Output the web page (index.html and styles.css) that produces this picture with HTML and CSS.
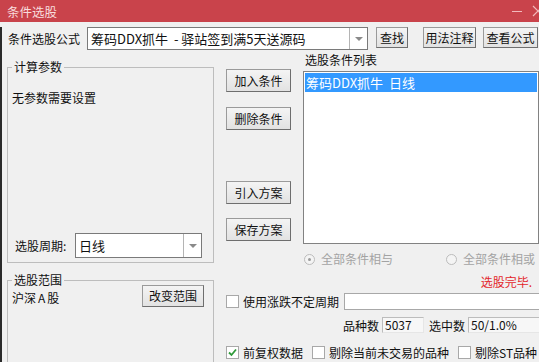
FILE: index.html
```html
<!DOCTYPE html>
<html lang="zh-CN">
<head>
  <meta charset="UTF-8"/>
  <title>条件选股</title>
  <link rel="stylesheet" href="styles.css">
</head>
<body>
  <div class="window">
    <!-- TITLE BAR -->
    <div class="titlebar">
      <span class="title">条件选股</span>
      <div class="title-ctrls">
        <span class="ctrl-min"></span>
        <svg class="ctrl-close" width="12" height="12" viewBox="0 0 12 12">
          <path d="M1 1 L11 11 M11 1 L1 11" stroke="#f2b9bc" stroke-width="1.2" fill="none"/>
        </svg>
      </div>
    </div>

    <div class="client">
      <!-- FORMULE -->
      <div class="formula-row">
        <span class="formula-label">条件选股公式</span>
        <div class="combo formula-combo">
          <span class="combo-text">筹码DDX抓牛 &nbsp;- 驿站签到满5天送源码</span>
          <span class="combo-drop"><i class="arrow"></i></span>
        </div>
        <button class="btn btn-find">查找</button>
        <button class="btn btn-usage">用法注释</button>
        <button class="btn btn-view">查看公式</button>
      </div>

      <div class="body">
        <!-- COLONNE GAUCHE -->
        <div class="left">
          <div class="group group-params">
            <span class="group-title">计算参数</span>
            <div class="no-params">无参数需要设置</div>
            <div class="period-row">
              <span class="period-label">选股周期:</span>
              <div class="combo period-combo">
                <span class="combo-text">日线</span>
                <span class="combo-drop"><i class="arrow"></i></span>
              </div>
            </div>
          </div>
          <div class="group group-range">
            <span class="group-title">选股范围</span>
            <div class="range-row">
              <span class="range-name">沪深<span class="wide">A</span>股</span>
              <button class="btn btn-range">改变范围</button>
            </div>
          </div>
        </div>

        <!-- COLONNE DROITE -->
        <div class="right">
          <div class="right-top">
            <div class="btn-col">
              <button class="btn btn-side btn-add">加入条件</button>
              <button class="btn btn-side btn-del">删除条件</button>
              <button class="btn btn-side btn-import">引入方案</button>
              <button class="btn btn-side btn-save">保存方案</button>
            </div>
            <div class="list-col">
              <div class="list-label">选股条件列表</div>
              <div class="listbox">
                <div class="list-item selected">筹码DDX抓牛 &nbsp;日线</div>
              </div>
            </div>
          </div>

          <div class="radio-row">
            <span class="radio checked"></span><span class="radio-text">全部条件相与</span>
            <span class="radio radio-or"></span><span class="radio-text">全部条件相或</span>
          </div>

          <div class="status">选股完毕.</div>

          <div class="check-row row-period">
            <span class="checkbox"></span>
            <span class="check-text">使用涨跌不定周期</span>
            <span class="field field-period"></span>
          </div>

          <div class="count-row">
            <span class="count-label">品种数</span>
            <span class="field field-total">5037</span>
            <span class="count-label">选中数</span>
            <span class="field field-selected">50/1.0%</span>
          </div>

          <div class="check-row row-options">
            <span class="checkbox checked">
              <svg width="11" height="11" viewBox="0 0 11 11"><path d="M2 5.5 L4.5 8 L9 2.5" stroke="#2f9a3a" stroke-width="1.8" fill="none"/></svg>
            </span>
            <span class="check-text">前复权数据</span>
            <span class="checkbox cb-gap"></span>
            <span class="check-text">剔除当前未交易的品种</span>
            <span class="checkbox cb-gap"></span>
            <span class="check-text">剔除ST品种</span>
          </div>
        </div>
      </div>
    </div>
  </div>
</body>
</html>
```

FILE: styles.css
```css
body {
  margin: 0;
  padding: 0;
  background: #f0f0f0;
}
.window {
  width: 539px;
  height: 362px;
  overflow: hidden;
  background: #f0f0f0;
  font-family: "Noto Sans CJK SC", "Microsoft YaHei", sans-serif;
  font-size: 12px;
  color: #111;
}
/* TITLE BAR */
.titlebar {
  height: 22px;
  background: #c9434b;
  display: flex;
  align-items: center;
  padding-left: 7px;
  color: #f8dcdd;
  font-size: 12.5px;
}
.title-ctrls {
  margin-left: auto;
  display: flex;
  align-items: center;
  margin-right: -5px;
}
.ctrl-min {
  width: 10px;
  height: 1px;
  background: #f2b9bc;
  margin-right: 10px;
}
.ctrl-close {
  display: block;
}
/* CLIENT */
.client {
  border-left: 2px solid #2a2a2a;
  height: 340px;
}
/* BUTTONS */
.btn {
  font-family: inherit;
  font-size: 12px;
  color: #111;
  background: linear-gradient(#f4f4f4, #e2e2e2);
  border: 1px solid;
  border-color: #9a9a9a #6e6e6e #6e6e6e #9a9a9a;
  padding: 0;
  margin: 0;
  line-height: 1;
  display: flex;
  align-items: center;
  justify-content: center;
}
/* COMBO */
.combo {
  background: #fff;
  border: 1px solid #7a7a7a;
  display: flex;
  align-items: center;
  box-sizing: border-box;
}
.combo-text {
  flex: 1;
  padding-left: 3px;
  white-space: nowrap;
  overflow: hidden;
}
.combo-drop {
  width: 17px;
  align-self: stretch;
  border-left: 1px solid #b4b4b4;
  display: flex;
  align-items: center;
  justify-content: center;
}
.arrow {
  width: 0;
  height: 0;
  border-left: 4px solid transparent;
  border-right: 4px solid transparent;
  border-top: 4px solid #8a8a8a;
}
/* FORMULA ROW */
.formula-row {
  display: flex;
  align-items: flex-start;
  margin-top: 5px;
  padding-left: 6px;
  height: 23px;
}
.formula-label {
  line-height: 23px;
  width: 79px;
}
.formula-combo {
  width: 281px;
  height: 23px;
  font-size: 13px;
}
.formula-combo .combo-text {
  padding-left: 3px;
}
.btn-find {
  margin-left: 8px;
  width: 32px;
  height: 21px;
}
.btn-usage {
  margin-left: 15px;
  width: 53px;
  height: 21px;
}
.btn-view {
  margin-left: 7px;
  width: 55px;
  height: 21px;
}
/* BODY */
.body {
  display: flex;
  margin-top: 3px;
}
.left {
  width: 207px;
  flex-shrink: 0;
  margin-left: 5px;
}
.group {
  border: 1px solid #bdbdbd;
  display: flex;
  flex-direction: column;
  box-sizing: border-box;
}
.group-title {
  align-self: flex-start;
  margin: -8px 0 0 4px;
  padding: 0 2px;
  line-height: 14px;
  background: #f0f0f0;
}
.group-params {
  margin-top: 14px;
  height: 196px;
}
.no-params {
  margin: 16px 0 0 4px;
  line-height: 16px;
}
.period-row {
  margin-top: auto;
  margin-bottom: 4px;
  display: flex;
  align-items: center;
  padding-left: 7px;
}
.period-label {
  width: 60px;
}
.period-combo {
  width: 127px;
  height: 25px;
  font-size: 13px;
}
.group-range {
  margin-top: 17px;
  height: 100px;
}
.range-row {
  display: flex;
  align-items: center;
  margin-top: -2px;
  padding: 0 9px 0 4px;
}
.range-name {
  margin-top: 3px;
}
.wide {
  padding: 0 2px;
}
.btn-range {
  margin-left: auto;
  width: 62px;
  height: 22px;
}
/* RIGHT */
.right {
  margin-left: 12px;
  flex: 1;
  min-width: 0;
}
.right-top {
  display: flex;
}
.btn-col {
  display: flex;
  flex-direction: column;
  width: 65px;
  flex-shrink: 0;
}
.btn-side {
  width: 65px;
  height: 23px;
}
.btn-add { margin-top: 16px; }
.btn-del { margin-top: 15px; }
.btn-import { margin-top: 51px; }
.btn-save { margin-top: 14px; }
.list-col {
  margin-left: 12px;
  width: 236px;
  flex-shrink: 0;
}
.list-label {
  line-height: 14px;
  padding-left: 2px;
}
.listbox {
  margin-top: 4px;
  height: 173px;
  background: #fff;
  border: 1px solid #828282;
  padding: 1px;
  box-sizing: border-box;
}
.list-item {
  height: 19px;
  line-height: 19px;
  font-size: 13px;
  padding-left: 1px;
  white-space: nowrap;
}
.list-item.selected {
  background: #3399ff;
  color: #fff;
}
/* RADIOS */
.radio-row {
  display: flex;
  align-items: center;
  margin-top: 7px;
  padding-left: 78px;
  line-height: 16px;
  color: #a3a3a3;
}
.radio {
  width: 9px;
  height: 9px;
  border: 1px solid #bcbcbc;
  border-radius: 50%;
  background: #f4f4f4;
  display: flex;
  align-items: center;
  justify-content: center;
}
.radio.checked::after {
  content: "";
  width: 3px;
  height: 3px;
  border-radius: 50%;
  background: #9a9a9a;
}
.radio-text {
  margin-left: 6px;
}
.radio-or {
  margin-left: 53px;
}
.status {
  margin-top: 8px;
  text-align: right;
  padding-right: 7px;
  line-height: 14px;
  color: #e3262a;
}
/* CHECKBOXES */
.check-row {
  display: flex;
  align-items: center;
}
.checkbox {
  width: 11px;
  height: 11px;
  border: 1px solid #a8a8a8;
  background: #fff;
  flex-shrink: 0;
  display: flex;
  align-items: center;
  justify-content: center;
}
.check-text {
  margin-left: 4px;
  white-space: nowrap;
}
.cb-gap {
  margin-left: 9px;
}
.row-period {
  margin-top: 3px;
  height: 18px;
}
.field {
  background: #fff;
  border: 1px solid #bcbcbc;
  border-right-color: #e6e6e6;
  border-bottom-color: #e6e6e6;
  box-sizing: border-box;
  line-height: 14px;
  padding-left: 2px;
}
.field-period {
  margin-left: 5px;
  flex: 1;
  height: 17px;
  margin-right: -4px;
  border-color: #a8a8a8;
}
.count-row {
  display: flex;
  align-items: center;
  margin-top: 7px;
  padding-left: 117px;
  height: 16px;
}
.count-row .field {
  height: 16px;
  background: #f7f7f7;
}
.count-label {
  margin-right: 3px;
}
.field-total {
  width: 42px;
  margin-right: 5px;
}
.field-selected {
  flex: 1;
  margin-right: -4px;
}
.row-options {
  margin-top: 11px;
  height: 16px;
}
```
